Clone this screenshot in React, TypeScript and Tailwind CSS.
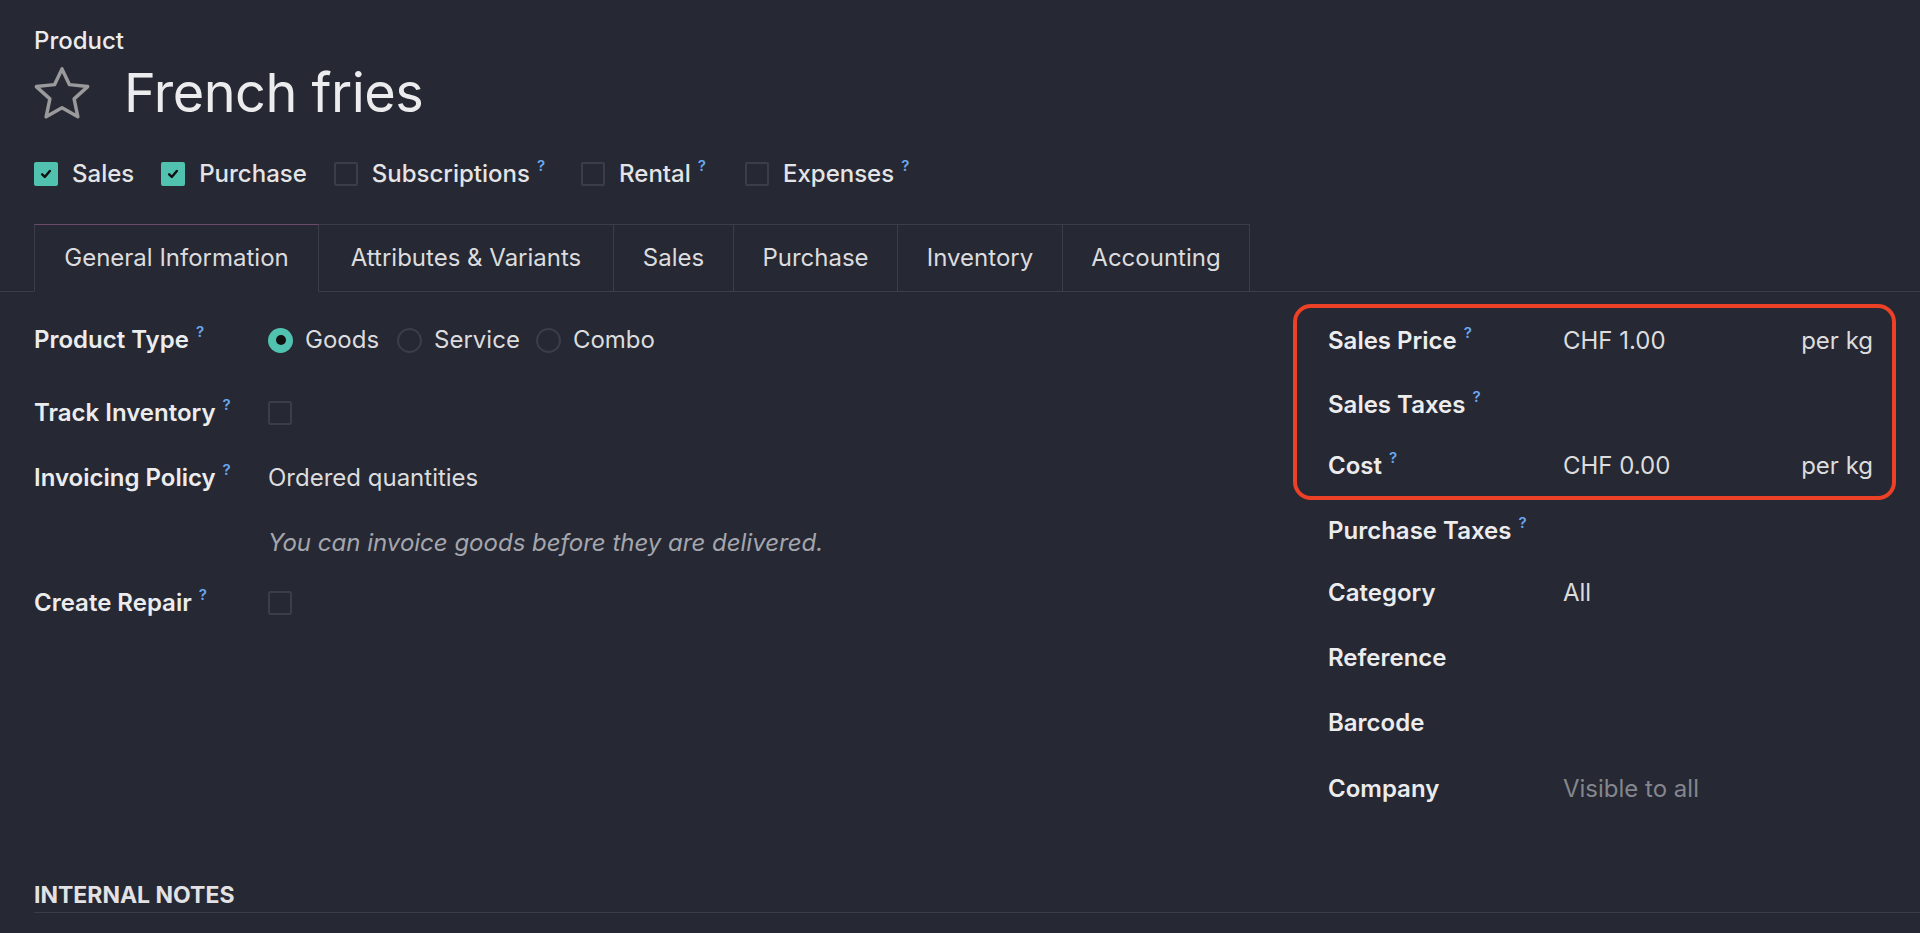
import React from "react";

const Q = () => (
  <span className="relative -top-[9px] ml-[7px] inline-block text-[15px] font-semibold leading-none text-[#6aa8f0]">?</span>
);

const Check = ({ checked }: { checked?: boolean }) =>
  checked ? (
    <span className="flex h-[24px] w-[24px] shrink-0 items-center justify-center rounded-[2px] bg-[#52c2b0]">
      <svg viewBox="0 0 16 16" className="h-[14px] w-[14px]">
        <path d="M3.6 8.4 L6.6 11.4 L12.4 4.6" fill="none" stroke="#111" strokeWidth="2.8" strokeLinecap="round" strokeLinejoin="round" />
      </svg>
    </span>
  ) : (
    <span className="block h-[24px] w-[24px] shrink-0 rounded-[2px] border-2 border-[#3b3d49]" />
  );

const Radio = ({ checked }: { checked?: boolean }) =>
  checked ? (
    <span className="flex h-[25px] w-[25px] shrink-0 items-center justify-center rounded-full bg-[#52c2b0]">
      <span className="block h-[10px] w-[10px] rounded-full bg-[#111]" />
    </span>
  ) : (
    <span className="block h-[25px] w-[25px] shrink-0 rounded-full border-2 border-[#3b3d49]" />
  );

const Star = () => (
  <svg viewBox="0 0 60 56" className="h-[54px] w-[58px] -ml-[1px]">
    <polygon
      points="30,3 37.76,19.32 56.63,21.35 42.55,34.08 46.46,52.65 30,43.2 13.54,52.65 17.45,34.08 3.37,21.35 22.24,19.32"
      fill="none"
      stroke="#9a9a9c"
      strokeWidth="3.6"
      strokeLinejoin="round"
    />
  </svg>
);

const OptionCheck = ({ label, checked, q }: { label: string; checked?: boolean; q?: boolean }) => (
  <div className="flex items-center">
    <Check checked={checked} />
    <span className="ml-[14px] font-medium text-[#e4e4e6]">{label}</span>
    {q && <Q />}
  </div>
);

const tabs = [
  { name: "General Information", w: "w-[285px] border-l", active: true },
  { name: "Attributes & Variants", w: "w-[295px]" },
  { name: "Sales", w: "w-[120px]" },
  { name: "Purchase", w: "w-[164px]" },
  { name: "Inventory", w: "w-[165px]" },
  { name: "Accounting", w: "w-[187px]" },
];

const Label = ({ children, q, w }: { children: React.ReactNode; q?: boolean; w: string }) => (
  <div className={`${w} flex shrink-0 items-center font-semibold text-[#ececee]`}>
    <span>{children}</span>
    {q && <Q />}
  </div>
);

export default function App() {
  return (
    <div className="min-h-screen w-full bg-[#262833] font-[Inter,sans-serif] text-[24px] text-[#dcdcde]">
      {/* Header */}
      <div className="pl-[34px] pt-[27px]">
        <div className="h-[28px] font-medium leading-[28px] text-[#ececee]">Product</div>
        <div className="mt-[8px] flex h-[60px] items-center">
          <Star />
          <h1 className="ml-[33px] text-[54px] font-normal leading-[60px] tracking-[-0.5px] text-[#ececee]">French fries</h1>
        </div>
        <div className="mt-[36px] flex h-[30px] items-center gap-[27px]">
          <OptionCheck label="Sales" checked />
          <OptionCheck label="Purchase" checked />
          <OptionCheck label="Subscriptions" q />
          <div className="ml-[9px]"><OptionCheck label="Rental" q /></div>
          <div className="ml-[12px]"><OptionCheck label="Expenses" q /></div>
        </div>
      </div>

      {/* Tabs */}
      <div className="mt-[35px] flex border-b border-[#3b3d49] pl-[34px]">
        {tabs.map((t) => (
          <div
            key={t.name}
            className={`${t.w} -mb-px flex h-[68px] items-center justify-center border-r border-t border-b border-[#3b3d49] ${
              t.active ? "border-t-[#6d4a69] border-b-[#262833]" : ""
            } text-[#dcdcde]`}
          >
            {t.name}
          </div>
        ))}
      </div>

      {/* Body */}
      <div className="flex">
        <div className="flex-1 pl-[34px]">
          <div className="mt-[28px] flex h-[40px] items-center">
            <Label w="w-[234px]" q>Product Type</Label>
            <div className="flex items-center">
              <Radio checked />
              <span className="ml-[12px]">Goods</span>
              <span className="ml-[18px]"><Radio /></span>
              <span className="ml-[12px]">Service</span>
              <span className="ml-[16px]"><Radio /></span>
              <span className="ml-[12px]">Combo</span>
            </div>
          </div>
          <div className="mt-[33px] flex h-[40px] items-center">
            <Label w="w-[234px]" q>Track Inventory</Label>
            <Check />
          </div>
          <div className="mt-[25px] flex h-[40px] items-center">
            <Label w="w-[234px]" q>Invoicing Policy</Label>
            <span>Ordered quantities</span>
          </div>
          <div className="mt-[25px] flex h-[40px] items-center pl-[234px] italic text-[#a4a6ad]">
            You can invoice goods before they are delivered.
          </div>
          <div className="mt-[20px] flex h-[40px] items-center">
            <Label w="w-[234px]" q>Create Repair</Label>
            <Check />
          </div>
        </div>

        <div className="mr-[24px] w-[603px] shrink-0 pt-[12px]">
          <div className="rounded-[18px] border-4 border-[#ec4127] pb-[10px] pl-[31px] pr-[19px] pt-[13px]">
            <div className="flex h-[40px] items-center">
              <Label w="w-[235px]" q>Sales Price</Label>
              <span className="flex-1">CHF 1.00</span>
              <span>per kg</span>
            </div>
            <div className="mt-[24px] flex h-[40px] items-center">
              <Label w="w-[235px]" q>Sales Taxes</Label>
            </div>
            <div className="mt-[21px] flex h-[40px] items-center">
              <Label w="w-[235px]" q>Cost</Label>
              <span className="flex-1">CHF 0.00</span>
              <span>per kg</span>
            </div>
          </div>
          <div className="pl-[35px]">
            <div className="mt-[11px] flex h-[40px] items-center">
              <Label w="w-[235px]" q>Purchase Taxes</Label>
            </div>
            <div className="mt-[22px] flex h-[40px] items-center">
              <Label w="w-[235px]">Category</Label>
              <span>All</span>
            </div>
            <div className="mt-[25px] flex h-[40px] items-center">
              <Label w="w-[235px]">Reference</Label>
            </div>
            <div className="mt-[25px] flex h-[40px] items-center">
              <Label w="w-[235px]">Barcode</Label>
            </div>
            <div className="mt-[26px] flex h-[40px] items-center">
              <Label w="w-[235px]">Company</Label>
              <span className="text-[#84868e]">Visible to all</span>
            </div>
          </div>
        </div>
      </div>

      {/* Internal notes */}
      <div className="ml-[34px] mt-[72px] border-b border-[#3b3d49] pb-[3px]">
        <div className="h-[28px] text-[23px] font-bold uppercase leading-[28px] text-[#e2e2e4]">Internal Notes</div>
      </div>
    </div>
  );
}
